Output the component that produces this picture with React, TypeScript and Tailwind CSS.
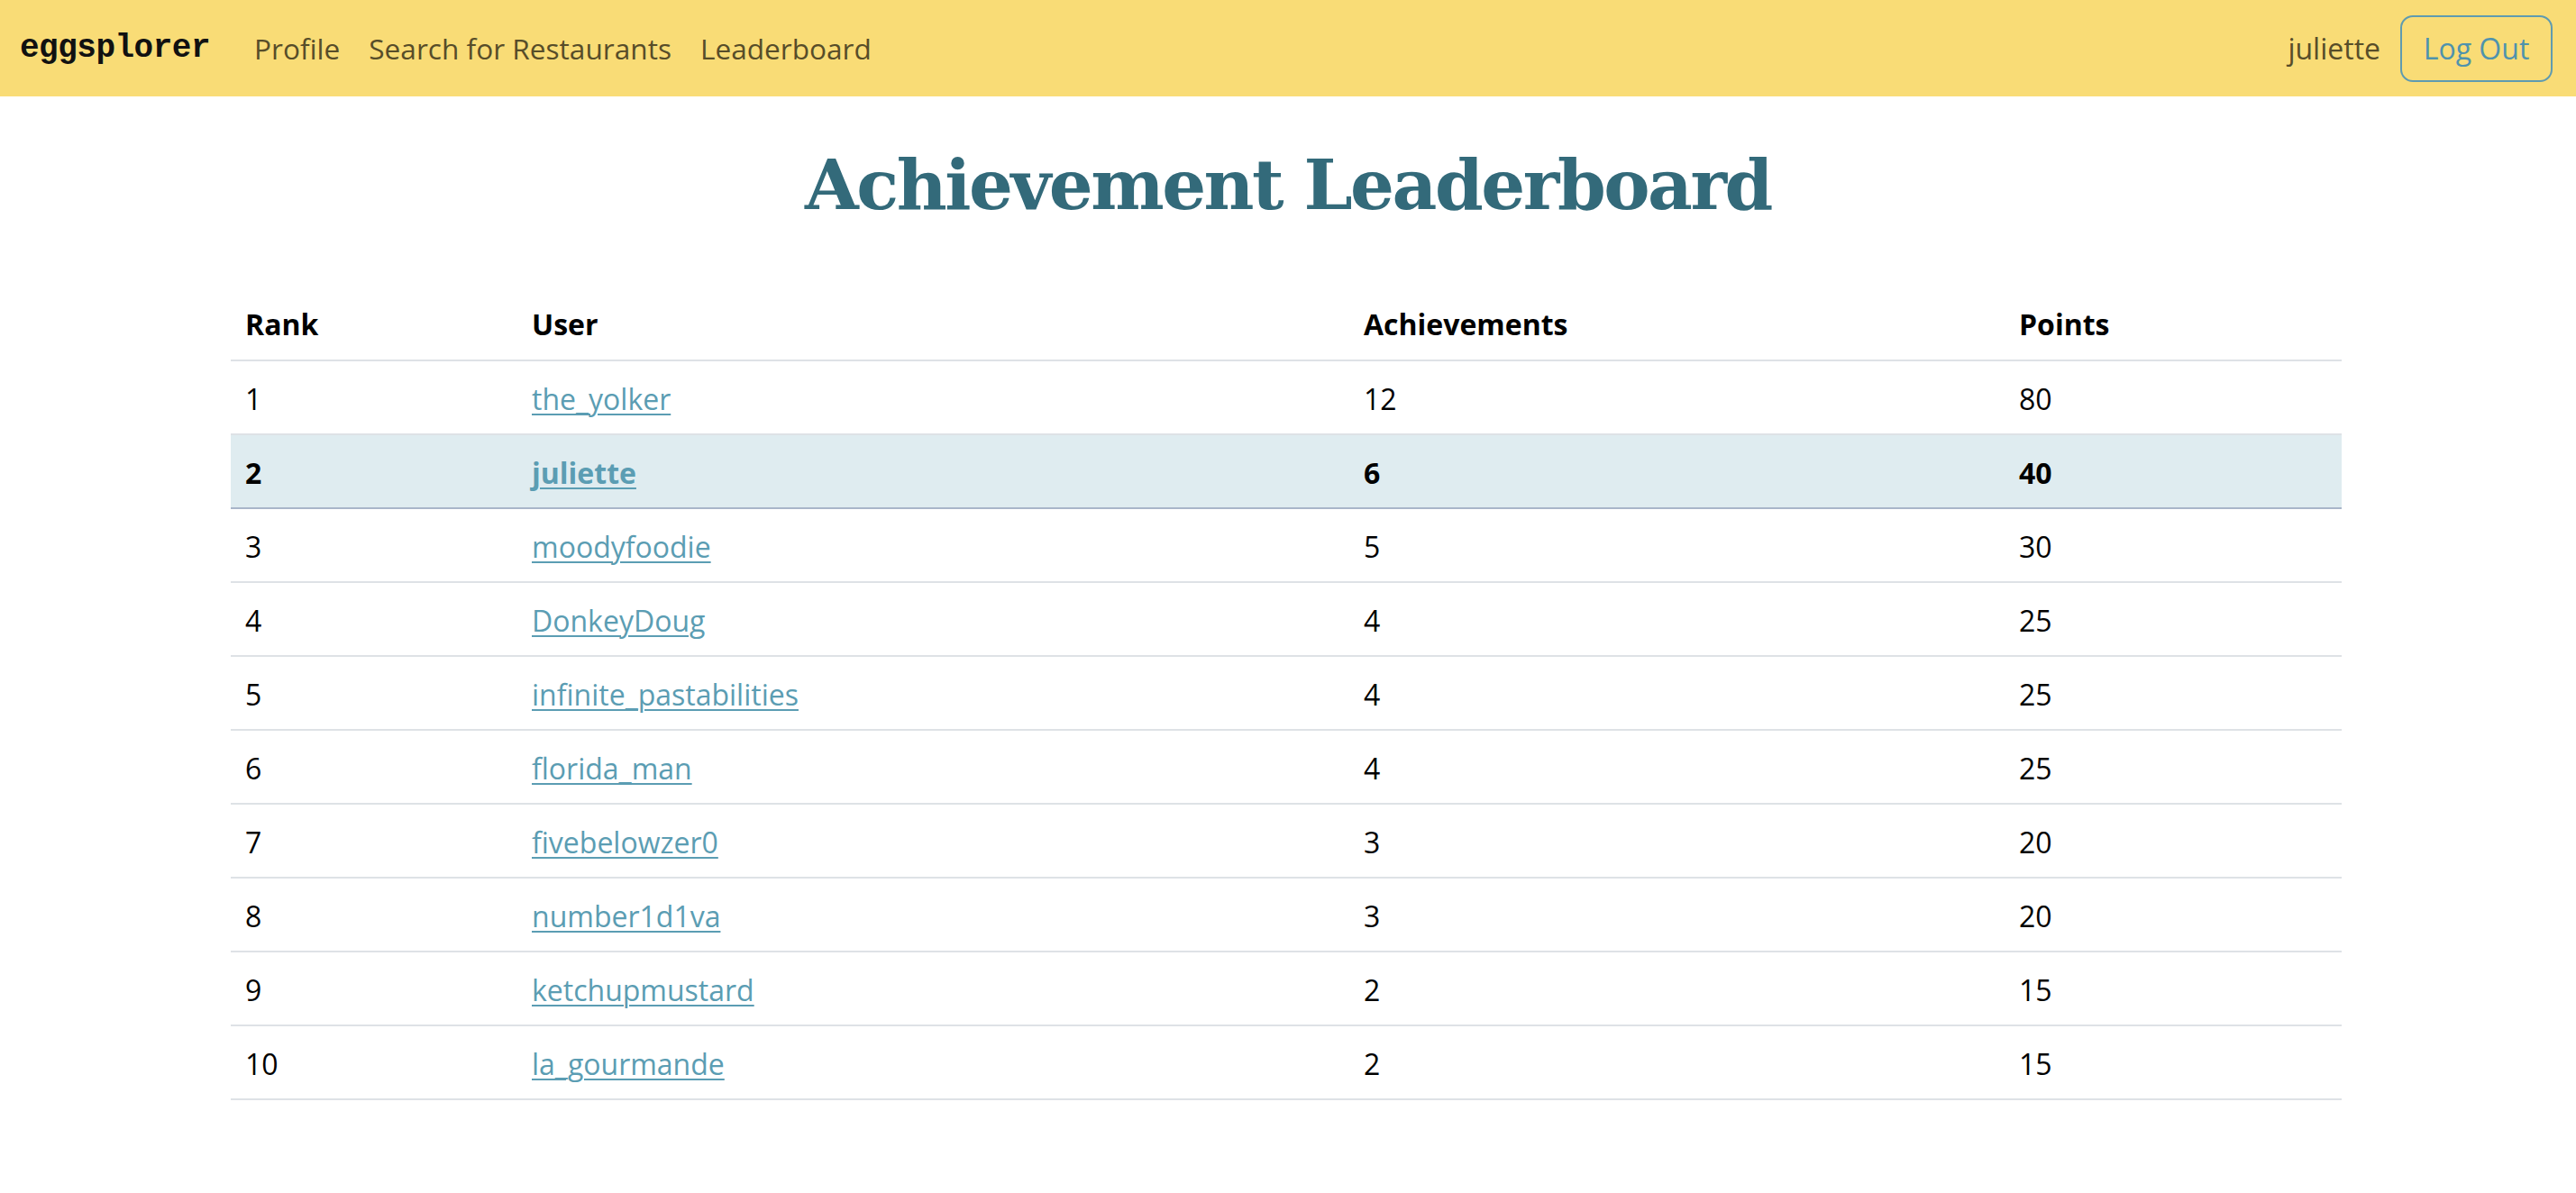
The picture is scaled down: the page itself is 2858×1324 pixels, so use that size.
import React from "react";

const rows = [
  { rank: 1, user: "the_yolker", ach: 12, pts: 80 },
  { rank: 2, user: "juliette", ach: 6, pts: 40, me: true },
  { rank: 3, user: "moodyfoodie", ach: 5, pts: 30 },
  { rank: 4, user: "DonkeyDoug", ach: 4, pts: 25 },
  { rank: 5, user: "infinite_pastabilities", ach: 4, pts: 25 },
  { rank: 6, user: "florida_man", ach: 4, pts: 25 },
  { rank: 7, user: "fivebelowzer0", ach: 3, pts: 20 },
  { rank: 8, user: "number1d1va", ach: 3, pts: 20 },
  { rank: 9, user: "ketchupmustard", ach: 2, pts: 15 },
  { rank: 10, user: "la_gourmande", ach: 2, pts: 15 },
];

export default function App() {
  return (
    <div className="min-h-[1324px] bg-white font-['Open_Sans',sans-serif] text-[32px] text-black">
      <nav className="flex h-[107px] items-center bg-[#f9dc76] pl-[22px] pr-[26px]">
        <span className="mr-[49px] font-['Liberation_Mono',monospace] text-[36px] font-bold tracking-[-0.5px] text-[#111]">
          eggsplorer
        </span>
        <div className="flex items-center gap-[32px] text-[31.6px] text-[#574d29]">
          <a>Profile</a>
          <a>Search for Restaurants</a>
          <a>Leaderboard</a>
        </div>
        <div className="ml-auto flex items-center">
          <span className="mr-[22px] text-[32px] text-[#574d29]">juliette</span>
          <button className="flex h-[74px] w-[169px] items-center justify-center rounded-[14px] border-2 border-[#5f9bb0] text-[32px] text-[#4f93ad]">
            Log Out
          </button>
        </div>
      </nav>

      <h1 className="mt-[47px] text-center font-['DejaVu_Serif',serif] text-[77px] font-bold leading-[102px] tracking-[-2.5px] text-[#336a7a]">
        Achievement Leaderboard
      </h1>

      <div className="mx-[256px] mt-[62px] w-[2342px]">
        <table className="w-full border-collapse">
          <colgroup>
            <col className="w-[318px]" />
            <col className="w-[923px]" />
            <col className="w-[727px]" />
            <col />
          </colgroup>
          <thead>
            <tr className="h-[82px] border-b-2 border-[#dee2e6]">
              <th className="px-[16px] pt-[3px] text-left font-bold">Rank</th>
              <th className="px-[16px] pt-[3px] text-left font-bold">User</th>
              <th className="px-[16px] pt-[3px] text-left font-bold">Achievements</th>
              <th className="px-[16px] pt-[3px] text-left font-bold">Points</th>
            </tr>
          </thead>
          <tbody>
            {rows.map((r) => (
              <tr
                key={r.rank}
                className={
                  r.me
                    ? "h-[82px] border-b-2 border-[#a9b5c9] bg-[#dfecf0] font-bold"
                    : "h-[82px] border-b-2 border-[#dee2e6]"
                }
              >
                <td className="px-[16px] pt-[3px]">{r.rank}</td>
                <td className="px-[16px] pt-[3px]">
                  <a className="text-[#5b9db3] underline decoration-[2px] underline-offset-[4px]">
                    {r.user}
                  </a>
                </td>
                <td className="px-[16px] pt-[3px]">{r.ach}</td>
                <td className="px-[16px] pt-[3px]">{r.pts}</td>
              </tr>
            ))}
          </tbody>
        </table>
      </div>
    </div>
  );
}
